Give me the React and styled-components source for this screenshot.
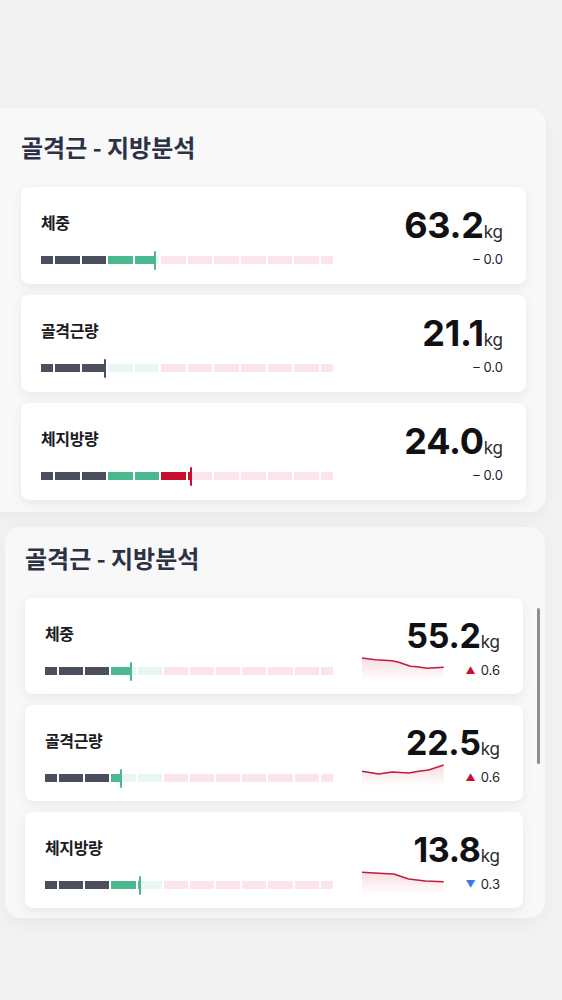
import React from "react";
import styled, { createGlobalStyle } from "styled-components";

const GlobalStyle = createGlobalStyle`
  html, body {
    margin: 0;
    padding: 0;
    background: #f3f3f4;
    font-family: Inter, "Noto Sans CJK KR", sans-serif;
    -webkit-font-smoothing: antialiased;
    overflow-x: hidden;
  }
`;

const ZONES = {
  dark: { full: "#4b4e5c", light: "#e4e5ea" },
  green: { full: "#4cb890", light: "#e9f6f1" },
  red: { full: "#c8102e", light: "#fbe5ea" },
};

const Page = styled.div`
  padding-top: 108px;
  padding-bottom: 60px;
  display: flex;
  flex-direction: column;
  gap: 15px;
`;

const Panel = styled.section`
  position: relative;
  width: ${({ $w }) => $w}px;
  margin-left: ${({ $x }) => $x}px;
  box-sizing: border-box;
  padding: ${({ $pad }) => $pad};
  background: #f8f8f9;
  border-radius: 16px;
  box-shadow: 0 6px 20px rgba(0, 0, 0, 0.05);
`;

const Heading = styled.h2`
  margin: 0 0 24px;
  font-family: "Noto Sans CJK KR", sans-serif;
  font-size: 24px;
  line-height: 32px;
  font-weight: 700;
  letter-spacing: 0;
  color: #2c3145;
`;

const CardList = styled.div`
  display: flex;
  flex-direction: column;
  gap: ${({ $gap }) => $gap}px;
`;

const Card = styled.div`
  box-sizing: border-box;
  height: ${({ $h }) => $h}px;
  padding: 14px 23px 0 20px;
  background: #ffffff;
  border-radius: 8px;
  box-shadow: 0 3px 12px rgba(0, 0, 0, 0.07);
  display: flex;
  flex-direction: column;
`;

const TopRow = styled.div`
  height: 44px;
  display: flex;
  align-items: center;
  justify-content: space-between;
`;

const Label = styled.span`
  font-family: "Noto Sans CJK KR", sans-serif;
  font-size: 16px;
  font-weight: 700;
  letter-spacing: -0.4px;
  color: #1b1b1f;
  margin-top: -2px;
`;

const Value = styled.span`
  display: flex;
  align-items: baseline;
  line-height: 1;
  margin-top: 4px;
`;

const Num = styled.span`
  font-family: Inter, sans-serif;
  font-size: ${({ $size }) => $size}px;
  font-weight: 700;
  letter-spacing: -0.3px;
  color: #111114;
`;

const Unit = styled.span`
  font-family: Inter, sans-serif;
  font-size: 17px;
  font-weight: 400;
  color: #2a2a2e;
  margin-left: 0;
`;

const BottomRow = styled.div`
  margin-top: 3px;
  height: 22px;
  display: flex;
  align-items: center;
`;

const BarTrack = styled.div`
  position: relative;
  flex: none;
  width: ${({ $w }) => $w}px;
  height: 8px;
  display: flex;
  gap: 2px;
  margin-top: 2px;
`;

const Segment = styled.div`
  position: relative;
  height: 8px;
  overflow: hidden;
  background: ${({ $zone }) => ZONES[$zone].light};
`;

const SegmentFill = styled.div`
  height: 100%;
  background: ${({ $zone }) => ZONES[$zone].full};
`;

const Marker = styled.div`
  position: absolute;
  top: -5.5px;
  width: 2px;
  height: 19px;
  border-radius: 1px;
  background: ${({ $zone }) => ZONES[$zone].full};
`;

const Spacer = styled.div`
  flex: 1;
`;

const Spark = styled.svg`
  flex: none;
  width: 82px;
  height: 24px;
  overflow: visible;
  margin-right: 22px;
`;

const Delta = styled.span`
  min-width: 33px;
  display: flex;
  align-items: center;
  justify-content: flex-end;
  gap: 5px;
  font-family: Inter, sans-serif;
  font-size: 13px;
  color: #222226;
`;

const Arrow = styled.span`
  font-size: 10px;
  line-height: 1;
  color: ${({ $up }) => ($up ? "#c8102e" : "#3a7bdc")};
`;

const ScrollThumb = styled.div`
  position: absolute;
  right: 5px;
  top: 81px;
  width: 3px;
  height: 156px;
  border-radius: 2px;
  background: #8f8f93;
`;

function buildSegments(width) {
  const gap = 2;
  const w = (width - 11 * gap) / 11;
  let x = 0;
  return Array.from({ length: 12 }, (_, i) => {
    const sw = i === 0 || i === 11 ? w / 2 : w;
    const seg = {
      start: x,
      end: x + sw,
      width: sw,
      zone: i < 3 ? "dark" : i < 5 ? "green" : "red",
    };
    x += sw + gap;
    return seg;
  });
}

const RangeBar = ({ width, pos }) => {
  const segs = buildSegments(width);
  const at = pos * width;
  const current = [...segs].reverse().find((s) => at >= s.start) || segs[0];
  return (
    <BarTrack $w={width}>
      {segs.map((s, i) => {
        const f = Math.max(0, Math.min(1, (at - s.start) / s.width));
        return (
          <Segment key={i} $zone={s.zone} style={{ width: s.width }}>
            <SegmentFill $zone={s.zone} style={{ width: `${f * 100}%` }} />
          </Segment>
        );
      })}
      <Marker $zone={current.zone} style={{ left: at - 1 }} />
    </BarTrack>
  );
};

const Sparkline = ({ points, id }) => {
  const line = points.map(([x, y], i) => `${i ? "L" : "M"}${x} ${y}`).join(" ");
  const area = `${line} L${points[points.length - 1][0]} 22 L0 22 Z`;
  return (
    <Spark viewBox="0 0 82 24">
      <defs>
        <linearGradient id={id} x1="0" y1="0" x2="0" y2="1">
          <stop offset="0" stopColor="#c8102e" stopOpacity="0.14" />
          <stop offset="1" stopColor="#c8102e" stopOpacity="0" />
        </linearGradient>
      </defs>
      <path d={area} fill={`url(#${id})`} />
      <path d={line} fill="none" stroke="#c21a3e" strokeWidth="1.5" strokeLinejoin="round" />
    </Spark>
  );
};

const firstSection = [
  { label: "체중", value: "63.2", pos: 0.39 },
  { label: "골격근량", value: "21.1", pos: 0.2175 },
  { label: "체지방량", value: "24.0", pos: 0.514 },
];

const secondSection = [
  {
    label: "체중",
    value: "55.2",
    pos: 0.2986,
    up: true,
    delta: "0.6",
    spark: [[0, 0], [13.4, 1.7], [30, 2.7], [36.7, 4.3], [48.4, 8.3], [55, 8.7], [65, 10.3], [81.7, 9.3]],
  },
  {
    label: "골격근량",
    value: "22.5",
    pos: 0.264,
    up: true,
    delta: "0.6",
    spark: [[0, 6.3], [16.7, 9], [30, 7], [46.7, 8], [56.7, 6.3], [66.7, 5], [81.7, 0]],
  },
  {
    label: "체지방량",
    value: "13.8",
    pos: 0.33,
    up: false,
    delta: "0.3",
    spark: [[0, 0.3], [16.7, 1.3], [31.7, 2], [46.7, 7], [63.4, 9], [81.7, 9.7]],
  },
];

export default function App() {
  return (
    <>
      <GlobalStyle />
      <Page>
        <Panel $w={556} $x={-10} $pad="23px 20px 12px 31px">
          <Heading>골격근 - 지방분석</Heading>
          <CardList $gap={11}>
            {firstSection.map((item) => (
              <Card key={item.label} $h={97}>
                <TopRow>
                  <Label>{item.label}</Label>
                  <Value>
                    <Num $size={36}>{item.value}</Num>
                    <Unit>kg</Unit>
                  </Value>
                </TopRow>
                <BottomRow>
                  <RangeBar width={292} pos={item.pos} />
                  <Spacer />
                  <Delta>– 0.0</Delta>
                </BottomRow>
              </Card>
            ))}
          </CardList>
        </Panel>

        <Panel $w={540} $x={5} $pad="15px 22px 10px 20px">
          <Heading>골격근 - 지방분석</Heading>
          <CardList $gap={11}>
            {secondSection.map((item, i) => (
              <Card key={item.label} $h={96}>
                <TopRow>
                  <Label>{item.label}</Label>
                  <Value>
                    <Num $size={34}>{item.value}</Num>
                    <Unit>kg</Unit>
                  </Value>
                </TopRow>
                <BottomRow>
                  <RangeBar width={288} pos={item.pos} />
                  <Spacer />
                  <Sparkline points={item.spark} id={`spark-${i}`} />
                  <Delta>
                    <Arrow $up={item.up}>{item.up ? "▲" : "▼"}</Arrow>
                    {item.delta}
                  </Delta>
                </BottomRow>
              </Card>
            ))}
          </CardList>
          <ScrollThumb />
        </Panel>
      </Page>
    </>
  );
}
